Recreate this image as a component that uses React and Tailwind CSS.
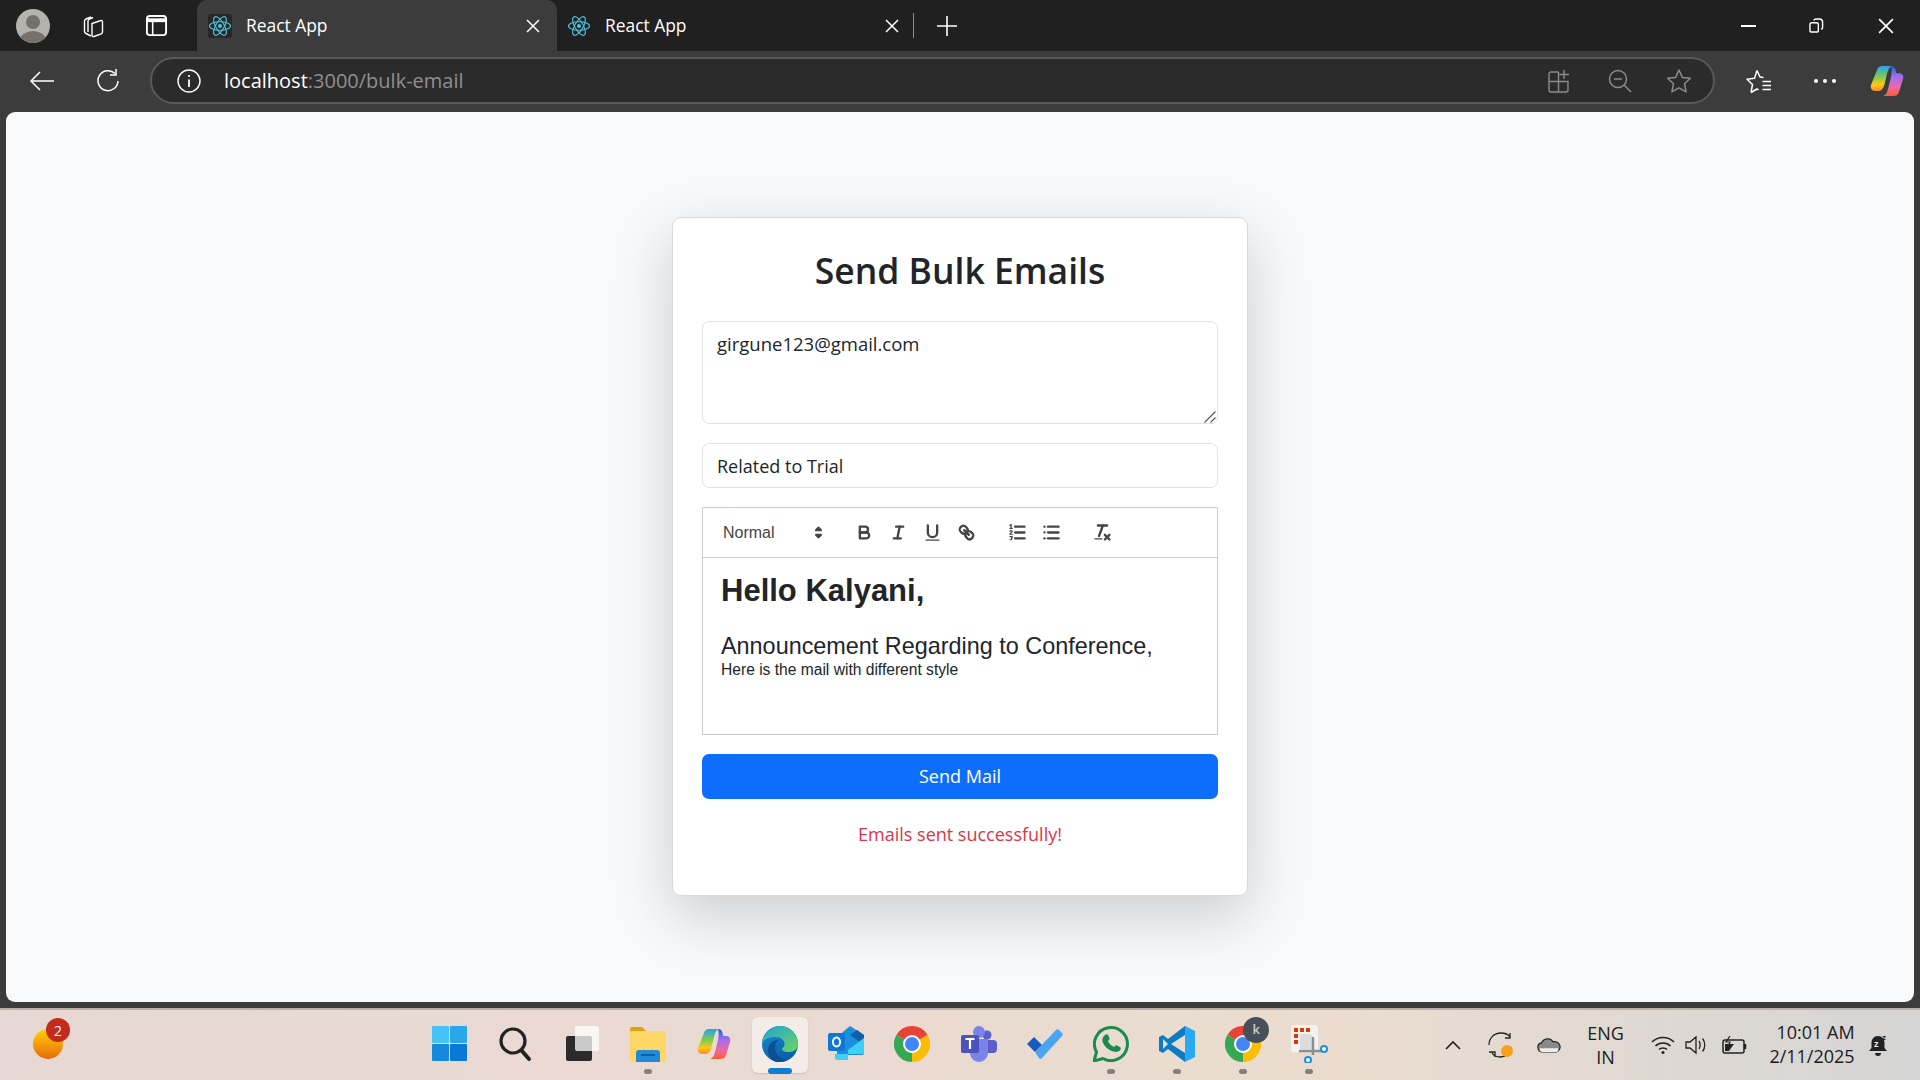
import React from "react";

const Atom = () => (
  <svg viewBox="0 0 24 24" className="w-[24px] h-[24px]" fill="none" stroke="#4fc3e0" strokeWidth="1.1">
    <ellipse cx="12" cy="12" rx="10.5" ry="4.2" />
    <ellipse cx="12" cy="12" rx="10.5" ry="4.2" transform="rotate(60 12 12)" />
    <ellipse cx="12" cy="12" rx="10.5" ry="4.2" transform="rotate(120 12 12)" />
    <circle cx="12" cy="12" r="2" fill="#4fc3e0" stroke="none" />
  </svg>
);

const XIcon = ({ size = 14, width = 1.5 }) => (
  <svg viewBox="0 0 14 14" width={size} height={size} fill="none" stroke="#fff" strokeWidth={width}>
    <path d="M1 1l12 12M13 1L1 13" />
  </svg>
);

const CopilotLogo = ({ a, b }) => (
  <svg viewBox="0 0 34 34" className="w-[34px] h-[34px]">
    <defs>
      <linearGradient id={a} x1="0" y1="0" x2="0" y2="1">
        <stop offset="0" stopColor="#2f9df0" />
        <stop offset="0.45" stopColor="#7fd04a" />
        <stop offset="0.75" stopColor="#ffc61a" />
        <stop offset="1" stopColor="#ff8a2a" />
      </linearGradient>
      <linearGradient id={b} x1="0" y1="0" x2="0" y2="1">
        <stop offset="0" stopColor="#1463d8" />
        <stop offset="0.35" stopColor="#a66bf0" />
        <stop offset="0.7" stopColor="#e86aa8" />
        <stop offset="1" stopColor="#ff5a34" />
      </linearGradient>
    </defs>
    <path d="M12 2h10c-3 1-4 4-5 8l-3 12c-1 3-3 5-6 5H5c-3 0-5-3-4-6L7 6c1-3 2.500-4 5-4z" fill={`url(#${a})`} />
    <path d="M21 2c2 0 4 1 4.500 3.500l.7 3.500H29c3.500 0 5 3 4 6l-4 13c-1 3-3 4-6 4H13c3-1 4-3.500 5-7l3-12c.7-3.500 1-7.500 0-11z" fill={`url(#${b})`} />
  </svg>
);

const TabStrip = () => (
  <div className="h-[51px] bg-[#202020] flex items-stretch shrink-0 text-white font-['Open_Sans',sans-serif]">
    <div className="w-[66px] flex items-center justify-center">
      <svg viewBox="0 0 34 34" className="w-[34px] h-[34px]">
        <defs>
          <clipPath id="avatarClip">
            <circle cx="17" cy="17" r="17" />
          </clipPath>
        </defs>
        <circle cx="17" cy="17" r="17" fill="#b5b3ae" />
        <g clipPath="url(#avatarClip)" fill="#75726e">
          <circle cx="17" cy="13" r="7" />
          <ellipse cx="17" cy="31" rx="13" ry="9" />
        </g>
      </svg>
    </div>
    <div className="w-[54px] flex items-center justify-center">
      <svg viewBox="0 0 26 26" className="w-[26px] h-[26px]" fill="none" stroke="#fff" strokeWidth="1.4" strokeLinejoin="round">
        <path d="M11 23l-5-2.500c-1-.5-1.500-1-1.500-2V8c0-1 .5-1.500 1.500-2l5-2" />
        <path d="M13 4.500l-3.500 1.500C8.500 6.500 8 7 8 8v11" />
        <path d="M12 10.500l9-3c1-.3 1.500.3 1.500 1.200V19c0 1-.5 1.500-1.300 1.800L14 23.500c-1 .3-2-.2-2-1.300z" />
      </svg>
    </div>
    <div className="w-[77px] flex items-center justify-center pr-[5px]">
      <svg viewBox="0 0 24 24" className="w-[23px] h-[23px]" fill="none" stroke="#fff" strokeWidth="2">
        <rect x="2" y="2" width="20" height="20" rx="3" />
        <path d="M2 6.500h20" strokeWidth="4" />
        <path d="M8 7v15" strokeWidth="1.6" />
      </svg>
    </div>

    <div className="w-[360px] bg-[#3c3c3c] rounded-t-[10px] flex items-center pl-[11px] pr-[17px]">
      <div className="w-[24px] h-[24px] bg-[#282828] rounded-[3px] flex items-center justify-center">
        <Atom />
      </div>
      <span className="ml-[14px] text-[17.400px] flex-1">React App</span>
      <XIcon />
    </div>

    <div className="w-[356px] flex items-center pl-[10px] pr-[14px] relative">
      <Atom />
      <span className="ml-[14px] text-[17.400px] flex-1">React App</span>
      <XIcon />
    </div>
    <div className="w-px h-[25px] bg-[#8a8a8a] self-center" />
    <div className="w-[66px] flex items-center justify-center">
      <svg viewBox="0 0 20 20" className="w-[20px] h-[20px]" stroke="#fff" strokeWidth="1.6">
        <path d="M10 0v20M0 10h20" />
      </svg>
    </div>

    <div className="flex-1" />
    <div className="w-[69px] flex items-center justify-center">
      <div className="w-[15px] h-[2px] bg-white" />
    </div>
    <div className="w-[69px] flex items-center justify-center pr-[2px]">
      <svg viewBox="0 0 16 16" className="w-[15px] h-[15px]" fill="none" stroke="#fff" strokeWidth="1.5">
        <rect x="1" y="5" width="9" height="10" rx="2" />
        <path d="M5 2.500C5.500 1.500 6.500 1 7.500 1h3.500c2 0 3.500 1.500 3.500 3.500V10c0 1-.5 1.800-1.500 2.200" />
      </svg>
    </div>
    <div className="w-[68px] flex items-center justify-center">
      <XIcon size={16} />
    </div>
  </div>
);

const AddressBar = () => (
  <div className="h-[61px] bg-[#3c3c3c] flex items-center shrink-0 font-['Open_Sans',sans-serif] pb-[2px]">
    <div className="w-[84px] flex items-center justify-center">
      <svg viewBox="0 0 26 22" className="w-[26px] h-[22px]" fill="none" stroke="#fff" strokeWidth="1.500">
        <path d="M25 11H2M11 2l-9 9 9 9" />
      </svg>
    </div>
    <div className="w-[48px] flex items-center justify-center">
      <svg viewBox="0 0 26 26" className="w-[26px] h-[26px]" fill="none" stroke="#fff" strokeWidth="1.500">
        <path d="M20 5.500A10 10 0 1 0 23 13" />
        <path d="M21 1v6h-6" />
      </svg>
    </div>
    <div className="ml-[18px] w-[1565px] h-[47px] rounded-full border-2 border-[#595959] bg-[#2b2b2b] flex items-center pl-[25px] pr-[21px]">
      <svg viewBox="0 0 24 24" className="w-[24px] h-[24px]" fill="none" stroke="#fff" strokeWidth="1.4">
        <circle cx="12" cy="12" r="11" />
        <path d="M12 10.500V18" strokeWidth="1.800" />
        <circle cx="12" cy="7" r="1.100" fill="#fff" stroke="none" />
      </svg>
      <div className="ml-[23px] text-[20px] flex-1 leading-none">
        <span className="text-white">localhost</span>
        <span className="text-[#8f8f8f]">:3000/bulk-email</span>
      </div>
      <svg viewBox="0 0 22 24" className="w-[22px] h-[24px]" fill="none" stroke="#8c8c8c" strokeWidth="1.400">
        <path d="M10.500 3H3a2 2 0 0 0-2 2v16a2 2 0 0 0 2 2h15a2 2 0 0 0 2-2v-8.500H1M10.500 3v20M16 1v9M11.500 5.500h9.500" />
      </svg>
      <svg viewBox="0 0 24 24" className="ml-[38px] w-[24px] h-[24px]" fill="none" stroke="#8c8c8c" strokeWidth="1.500">
        <circle cx="10" cy="10" r="8.500" />
        <path d="M6 10h8M16 16l7 7" />
      </svg>
      <svg viewBox="0 0 26 26" className="ml-[34px] w-[26px] h-[26px]" fill="none" stroke="#8c8c8c" strokeWidth="1.500" strokeLinejoin="round">
        <path d="M13 2l3.400 7.400 8 .9-5.900 5.500 1.600 8L13 19.800l-7.100 4 1.600-8L1.600 10.300l8-.9z" />
      </svg>
    </div>
    <div className="w-[60px] ml-[14px] flex items-center justify-center">
      <svg viewBox="0 0 26 26" className="w-[26px] h-[26px]" fill="none" stroke="#fff" strokeWidth="1.500" strokeLinejoin="round">
        <path d="M11 2.500l3 6.500 3.500.5M5 24.500l6-3.500 1.500.8M5 24.500l1.500-8-5.500-5.200 7.500-1L11 2.500M16.500 13.500H25M16.500 17.500H25M16.500 21.500H25" />
      </svg>
    </div>
    <div className="w-[72px] flex items-center justify-center gap-[5px]">
      <span className="w-[4px] h-[4px] rounded-full bg-white" />
      <span className="w-[4px] h-[4px] rounded-full bg-white" />
      <span className="w-[4px] h-[4px] rounded-full bg-white" />
    </div>
    <div className="w-[52px] flex items-center justify-center">
      <CopilotLogo a="copilotA" b="copilotB" />
    </div>
  </div>
);

// quill toolbar buttons, stroke paths taken from the snow theme look
const stroke = { fill: "none", stroke: "#444", strokeWidth: 2, strokeLinecap: "round", strokeLinejoin: "round" };
const thin = { fill: "none", stroke: "#444", strokeWidth: 1, strokeLinecap: "round" };

const QlBtn = ({ children }) => (
  <button type="button" className="w-[34px] h-[29px] flex items-center justify-center">
    <svg viewBox="0 0 18 18" className="w-[21px] h-[21px]">
      {children}
    </svg>
  </button>
);

const EditorToolbar = () => (
  <div className="h-[50px] border-b border-[#ccc] flex items-center pl-[8px] font-['Liberation_Sans',sans-serif]">
    <div className="w-[118px] mr-[18px] pl-[12px] flex items-center justify-between text-[#444] text-[16px] font-medium">
      <span>Normal</span>
      <svg viewBox="0 0 18 18" className="w-[21px] h-[21px]">
        <polygon points="7 11 9 13 11 11 7 11" {...stroke} />
        <polygon points="7 7 9 5 11 7 7 7" {...stroke} />
      </svg>
    </div>
    <QlBtn>
      <path d="M5,4H9.500A2.500,2.500,0,0,1,12,6.500v0A2.500,2.500,0,0,1,9.500,9H5V4Z" {...stroke} />
      <path d="M5,9h5.500A2.500,2.500,0,0,1,13,11.500v0A2.500,2.500,0,0,1,10.500,14H5V9Z" {...stroke} />
    </QlBtn>
    <QlBtn>
      <line x1="7" x2="13" y1="4" y2="4" {...stroke} />
      <line x1="5" x2="11" y1="14" y2="14" {...stroke} />
      <line x1="8" x2="10" y1="14" y2="4" {...stroke} />
    </QlBtn>
    <QlBtn>
      <path d="M5,3V9a4,4,0,0,0,4,4H9a4,4,0,0,0,4-4V3" {...stroke} />
      <rect height="1" rx=".5" ry=".5" width="12" x="3" y="15" fill="#444" />
    </QlBtn>
    <QlBtn>
      <line x1="7" x2="11" y1="7" y2="11" {...stroke} />
      <path d="M8.900,4.577a3.476,3.476,0,0,1,.36,4.679A3.476,3.476,0,0,1,4.577,8.900C3.185,7.500,2.035,6.400,4.217,4.217S7.500,3.185,8.900,4.577Z" {...stroke} />
      <path d="M13.423,9.100a3.476,3.476,0,0,0-4.679-.36,3.476,3.476,0,0,0,.36,4.679c1.392,1.392,2.500,2.542,4.679.36S14.815,10.500,13.423,9.100Z" {...stroke} />
    </QlBtn>
    <div className="w-[17px]" />
    <QlBtn>
      <line x1="7" x2="15" y1="4" y2="4" {...stroke} />
      <line x1="7" x2="15" y1="9" y2="9" {...stroke} />
      <line x1="7" x2="15" y1="14" y2="14" {...stroke} />
      <line x1="2.500" x2="4.500" y1="5.500" y2="5.500" {...thin} />
      <path d="M3.500,2v3.500M2.500,3l1-1" {...thin} />
      <path d="M2.500,7.800c.6-.6,2-.5,2,.4,0,.8-2,1.400-2,2.300h2" {...thin} />
      <path d="M2.500,12.500h1.500c.8,0,.8,1.200,0,1.200h-.6c.9,0,.9,1.500,0,1.500H2.500" {...thin} />
    </QlBtn>
    <QlBtn>
      <line x1="6" x2="15" y1="4" y2="4" {...stroke} />
      <line x1="6" x2="15" y1="9" y2="9" {...stroke} />
      <line x1="6" x2="15" y1="14" y2="14" {...stroke} />
      <line x1="3" x2="3" y1="4" y2="4" {...stroke} />
      <line x1="3" x2="3" y1="9" y2="9" {...stroke} />
      <line x1="3" x2="3" y1="14" y2="14" {...stroke} />
    </QlBtn>
    <div className="w-[17px]" />
    <QlBtn>
      <line x1="5" x2="13" y1="3" y2="3" {...stroke} />
      <line x1="6" x2="9.350" y1="12" y2="3" {...stroke} />
      <line x1="11" x2="15" y1="11" y2="15" {...stroke} />
      <line x1="15" x2="11" y1="11" y2="15" {...stroke} />
      <rect height="1" rx=".5" ry=".5" width="7" x="2" y="14" fill="#444" />
    </QlBtn>
  </div>
);

const BulkEmailCard = () => (
  <div className="w-[576px] h-[679px] mb-[1px] bg-white border border-[#d9dadb] rounded-[9px] shadow-[0_20px_60px_rgba(0,0,0,0.175)] px-[29px] pt-[33px] flex flex-col font-['Open_Sans',sans-serif]">
    <h2 className="text-[35.500px] leading-[38px] font-semibold text-[#212529] text-center mb-[32px]">Send Bulk Emails</h2>
    <div className="relative">
      <textarea
        readOnly
        defaultValue="girgune123@gmail.com"
        className="block w-full h-[103px] border border-[#dee2e6] rounded-[7px] px-[14px] py-[10px] text-[18.500px] leading-[24px] text-[#212529] bg-white resize-none outline-none"
      />
      <svg viewBox="0 0 12 12" className="absolute right-[2px] bottom-[1px] w-[12px] h-[12px]" fill="none" stroke="#555" strokeWidth="1.100">
        <path d="M11.500 0.500L0.500 11.500M11.500 6.500L6.500 11.500" />
      </svg>
    </div>
    <input
      readOnly
      defaultValue="Related to Trial"
      className="block w-full h-[45px] mt-[19px] border border-[#dee2e6] rounded-[7px] px-[14px] text-[18px] text-[#212529] bg-white outline-none"
    />
    <div className="mt-[19px] h-[228px] border border-[#ccc] flex flex-col">
      <EditorToolbar />
      <div className="flex-1 px-[18px] pt-[15px] font-['Liberation_Sans',sans-serif] text-[#212529]">
        <h1 className="text-[31px] leading-[36px] font-bold">Hello Kalyani,</h1>
        <p className="text-[23.400px] leading-[28px] mt-[23px]">Announcement Regarding to Conference,</p>
        <p className="text-[15.600px] leading-[19px]">Here is the mail with different style</p>
      </div>
    </div>
    <button type="button" className="mt-[19px] h-[45px] w-full shrink-0 bg-[#0d6efd] rounded-[7px] text-white text-[18px]">
      Send Mail
    </button>
    <p className="mt-[23px] text-center text-[18px] leading-[24px] text-[#dc3545]">Emails sent successfully!</p>
  </div>
);

const ChromeLogo = () => (
  <svg viewBox="0 0 36 36" className="w-[36px] h-[36px]">
    <path d="M18 18L2.400 9A18 18 0 0 1 33.600 9Z" fill="#ea4335" />
    <path d="M18 18L33.600 9A18 18 0 0 1 18 36Z" fill="#fbbc04" />
    <path d="M18 18L18 36A18 18 0 0 1 2.400 9Z" fill="#34a853" />
    <circle cx="18" cy="18" r="9" fill="#fff" />
    <circle cx="18" cy="18" r="7" fill="#4285f4" />
  </svg>
);

const TaskIcon = ({ children, running, active }) => (
  <div className="relative w-[66.200px] h-[70px] flex items-center justify-center">
    {active && (
      <div className="absolute left-[5px] top-[7px] w-[56px] h-[56px] rounded-[6px] bg-[#f4ece6] shadow-[0_1px_2px_rgba(0,0,0,0.12)]" />
    )}
    <div className="relative mb-[3px] flex items-center justify-center">{children}</div>
    {running && <div className="absolute left-[29px] top-[59px] w-[8px] h-[5px] rounded-full bg-[#85807c]" />}
    {active && <div className="absolute left-[21px] top-[58px] w-[24px] h-[6px] rounded-full bg-[#0f7fd6]" />}
  </div>
);

const Taskbar = () => (
  <div className="h-[72px] shrink-0 border-t-2 border-[#b9aea8] bg-gradient-to-r from-[#e8d8d5] via-[#ebdccf] via-70% to-[#d5d5d5] flex items-stretch font-['Open_Sans',sans-serif]">
    <div className="w-[416px] pl-[33px] pt-[19px]">
      <div className="relative w-[30px] h-[30px] rounded-full bg-gradient-to-b from-[#ffd000] to-[#e66a0c]">
        <div className="absolute left-[13px] top-[-11px] w-[24px] h-[24px] rounded-full bg-[#c42b1c] text-white text-[14px] flex items-center justify-center">
          2
        </div>
      </div>
    </div>

    <div className="flex items-stretch">
      <TaskIcon>
        <svg viewBox="0 0 35 35" className="w-[35px] h-[35px]">
          <rect x="0" y="0" width="17" height="17" rx="1" fill="#45c2f7" />
          <rect x="18" y="0" width="17" height="17" rx="1" fill="#2aa6ea" />
          <rect x="0" y="18" width="17" height="17" rx="1" fill="#1689dd" />
          <rect x="18" y="18" width="17" height="17" rx="1" fill="#0a78d4" />
        </svg>
      </TaskIcon>
      <TaskIcon>
        <svg viewBox="0 0 34 36" className="w-[34px] h-[36px]" fill="none" stroke="#222" strokeLinecap="round">
          <circle cx="15" cy="15" r="12" strokeWidth="3.200" />
          <path d="M24 25l7 8" strokeWidth="4" />
        </svg>
      </TaskIcon>
      <TaskIcon>
        <svg viewBox="0 0 36 36" className="w-[36px] h-[36px]">
          <rect x="3" y="10" width="26" height="25" rx="2" fill="#2b2b2b" />
          <rect x="12" y="0" width="24" height="25" rx="2" fill="#fff" fillOpacity="0.75" />
        </svg>
      </TaskIcon>
      <TaskIcon running>
        <svg viewBox="0 0 36 36" className="w-[36px] h-[36px]">
          <path d="M0 3a2 2 0 0 1 2-2h10l4 4v4H0z" fill="#dba30f" />
          <rect x="0" y="5" width="36" height="31" rx="1" fill="#ffd766" />
          <path d="M6 36V27a3 3 0 0 1 3-3h18a3 3 0 0 1 3 3v9z" fill="#1f8ad6" />
          <rect x="11" y="28" width="14" height="2" fill="#0f5fa8" />
        </svg>
      </TaskIcon>
      <TaskIcon>
        <CopilotLogo a="tbCopA" b="tbCopB" />
      </TaskIcon>
      <TaskIcon active>
        <svg viewBox="0 0 36 36" className="w-[36px] h-[36px]">
          <defs>
            <linearGradient id="edgeA" x1="0" y1="0" x2="1" y2="1">
              <stop offset="0" stopColor="#1fa2dc" />
              <stop offset="1" stopColor="#6bd85a" />
            </linearGradient>
            <linearGradient id="edgeB" x1="0" y1="0" x2="0.4" y2="1">
              <stop offset="0" stopColor="#1a8ed6" />
              <stop offset="1" stopColor="#0c5fa8" />
            </linearGradient>
          </defs>
          <circle cx="18" cy="18" r="18" fill="url(#edgeB)" />
          <path d="M0 18C0 8 8 0 18 0s18 8 18 18c0 5-4 8-9 8-4 0-7-1-7-3 0-.6.4-1 1-1.500 1-1 1.500-2 1.500-3.500 0-4-4-7-9-7C7 11 2 13 0 18z" fill="url(#edgeA)" />
          <path d="M14 36c-5-2-8-7-8-12 0-6 5-10 10-10-2 2-3 5-3 8 0 6 5 11 12 12-3 1.500-7 3-11 2z" fill="#0b4f94" />
        </svg>
      </TaskIcon>
      <TaskIcon>
        <svg viewBox="0 0 36 36" className="w-[36px] h-[36px]">
          <path d="M22 0l14 9v18a2 2 0 0 1-2 2H9V11z" fill="#1a8fe0" />
          <path d="M36 9v10L22 9l7-5z" fill="#0f5fa8" />
          <path d="M7 28h27a2 2 0 0 0 2-2V12L20 24v10H9a2 2 0 0 1-2-2z" fill="#3fd0f5" />
          <rect x="0" y="7" width="17" height="18" rx="2" fill="#0f78d4" />
          <ellipse cx="8.500" cy="16" rx="3.600" ry="4.500" fill="none" stroke="#fff" strokeWidth="2" />
        </svg>
      </TaskIcon>
      <TaskIcon>
        <ChromeLogo />
      </TaskIcon>
      <TaskIcon>
        <svg viewBox="0 0 36 36" className="w-[36px] h-[36px]">
          <circle cx="26" cy="9" r="4.500" fill="#5b5fc7" />
          <rect x="22" y="14" width="14" height="13" rx="4" fill="#5b5fc7" />
          <circle cx="18" cy="6" r="6" fill="#7b83eb" />
          <path d="M9 13h18v14a9 9 0 0 1-18 0z" fill="#7b83eb" />
          <rect x="0" y="9" width="18" height="18" rx="2" fill="#4b53bc" />
          <path d="M4.500 13h9M9 13v10" stroke="#fff" strokeWidth="2.200" />
        </svg>
      </TaskIcon>
      <TaskIcon>
        <svg viewBox="0 0 36 30" className="w-[36px] h-[30px]">
          <path d="M0 15l7-7 8 8-7 7z" fill="#185abd" />
          <path d="M8 23L29 1a2 2 0 0 1 3 0l3 3a2 2 0 0 1 0 3L15 29a2 2 0 0 1-3 0z" fill="#4aa5ee" />
        </svg>
      </TaskIcon>
      <TaskIcon running>
        <svg viewBox="0 0 36 36" className="w-[36px] h-[36px]">
          <path d="M1 35l2.500-9A16.500 16.500 0 1 1 10 32.500z" fill="none" stroke="#1a8a4f" strokeWidth="3" strokeLinejoin="round" />
          <path d="M12 9c1-1 2.500-1 3 0l1.500 3c.3.7 0 1.400-1.500 3 1 2.500 3 4.500 6 6 1.500-1.500 2.200-2 3-1.500l3 1.500c1 .5 1 2 .2 3-1.500 2-4 2.500-7 1.500C15 24 11 20 9.500 15.500 9 13 10 10.500 12 9z" fill="#1a8a4f" />
        </svg>
      </TaskIcon>
      <TaskIcon running>
        <svg viewBox="0 0 36 36" className="w-[36px] h-[36px]">
          <path d="M26 0l10 5v26l-10 5z" fill="#29a9f2" />
          <path d="M26 0v9L12 18l14 9v9L9 23l-5 4-4-2v-14l4-2 5 4z" fill="#0a7cc4" />
          <path d="M4 13v10l5-5z" fill="#e9dcd2" />
        </svg>
      </TaskIcon>
      <TaskIcon running>
        <div className="relative">
          <ChromeLogo />
          <div className="absolute left-[18px] top-[-9px] w-[26px] h-[26px] rounded-full bg-[#475058] text-[#c8ced3] text-[13px] font-semibold flex items-center justify-center">
            k
          </div>
        </div>
      </TaskIcon>
      <TaskIcon running>
        <svg viewBox="0 0 38 38" className="w-[38px] h-[38px]">
          <rect x="0" y="0" width="27" height="27" rx="3" fill="#f2f2f2" />
          <rect x="3" y="3" width="4" height="4" fill="#d83b01" />
          <rect x="9" y="3" width="4" height="4" fill="#d83b01" />
          <rect x="15" y="3" width="4" height="4" fill="#d83b01" />
          <rect x="3" y="9" width="4" height="4" fill="#d83b01" />
          <rect x="3" y="15" width="4" height="4" fill="#d83b01" />
          <path d="M9 9h8c3 0 5 2 5 5v10H9z" fill="#dcdcdc" />
          <path d="M8 26h24M22 12v18" stroke="#8a8f94" strokeWidth="2.500" />
          <circle cx="33" cy="24" r="3" fill="#fff" stroke="#1a8fe0" strokeWidth="2" />
          <circle cx="17" cy="35" r="3" fill="#fff" stroke="#1a8fe0" strokeWidth="2" />
        </svg>
      </TaskIcon>
    </div>

    <div className="flex-1 flex items-center pl-[102px] text-[#1b1b1b]">
      <svg viewBox="0 0 16 10" className="w-[16px] h-[10px]" fill="none" stroke="#222" strokeWidth="1.600">
        <path d="M1 9l7-7 7 7" />
      </svg>
      <svg viewBox="0 0 26 26" className="ml-[27px] w-[26px] h-[26px]" fill="none" stroke="#222" strokeWidth="1.300">
        <path d="M1 13C1 6 6 1 13 1c3 0 7 1 9 4M22 1v5h-5M23 15c-1 6-5 10-11 10-3 0-6-1-8-4M1 20h6v5" />
        <circle cx="19" cy="19" r="6" fill="#f9a01b" stroke="none" />
      </svg>
      <svg viewBox="0 0 26 16" className="ml-[23px] w-[24px] h-[15px]">
        <path d="M6 15a5 5 0 0 1-1-9.900 7 7 0 0 1 12.500-1A5.500 5.500 0 0 1 21 15z" fill="#8a8a8a" stroke="#222" strokeWidth="1.300" />
        <path d="M3 11h20v2a2 2 0 0 1-2 2H6a3 3 0 0 1-3-3z" fill="#eee" />
      </svg>
      <div className="ml-[13px] w-[64px] text-center text-[18px] leading-[24px]">
        <div>ENG</div>
        <div>IN</div>
      </div>
      <svg viewBox="0 0 24 18" className="ml-[13px] w-[24px] h-[18px]" fill="none" stroke="#222" strokeWidth="1.500">
        <path d="M1 6c6-6 16-6 22 0M4.500 10c4-4 11-4 15 0M8 13.500c2-2 6-2 8 0" />
        <circle cx="12" cy="16.500" r="1.500" fill="#222" stroke="none" />
      </svg>
      <svg viewBox="0 0 24 20" className="ml-[10px] w-[24px] h-[20px]" fill="none" stroke="#222" strokeWidth="1.300">
        <path d="M1 7v6h4l6 5V2L5 7zM14 6c1.500 2 1.500 6 0 8M17.500 3.500c3 3.500 3 9.500 0 13" />
      </svg>
      <svg viewBox="0 0 26 18" className="ml-[13px] w-[26px] h-[18px]" fill="none" stroke="#222" strokeWidth="1.500">
        <rect x="1" y="4" width="21" height="13" rx="2" />
        <path d="M23 8v5" strokeWidth="2.500" />
        <path d="M3 15V8l9 0-5 7z" fill="#222" stroke="none" />
        <path d="M8 0L4 6h4l-2 5" stroke="#222" strokeWidth="1.200" />
      </svg>
      <div className="ml-[7px] w-[100px] text-right text-[18px] leading-[24px] mb-[3px]">
        <div>10:01 AM</div>
        <div>2/11/2025</div>
      </div>
      <svg viewBox="0 0 22 24" className="ml-[12px] w-[22px] h-[24px]" fill="#222">
        <path d="M11 3c-4 0-6.500 3-6.500 7v5L2 18h18l-2.500-3v-5c0-4-2.500-7-6.500-7zM8 20h6a3 3 0 0 1-6 0z" />
        <text x="7" y="14" fontSize="9" fontWeight="700" fill="#eee" fontFamily="Liberation Sans, sans-serif">z</text>
        <text x="15" y="7" fontSize="8" fontWeight="700" fill="#222" fontFamily="Liberation Sans, sans-serif">z</text>
      </svg>
    </div>
  </div>
);

export default function App() {
  return (
    <div className="w-[1920px] h-[1080px] flex flex-col overflow-hidden bg-[#3c3c3c]">
      <TabStrip />
      <AddressBar />
      <div className="h-[890px] shrink-0 mx-[6px] rounded-[9px] bg-[#f8f9fa] flex items-center justify-center overflow-hidden">
        <BulkEmailCard />
      </div>
      <div className="flex-1" />
      <Taskbar />
    </div>
  );
}
